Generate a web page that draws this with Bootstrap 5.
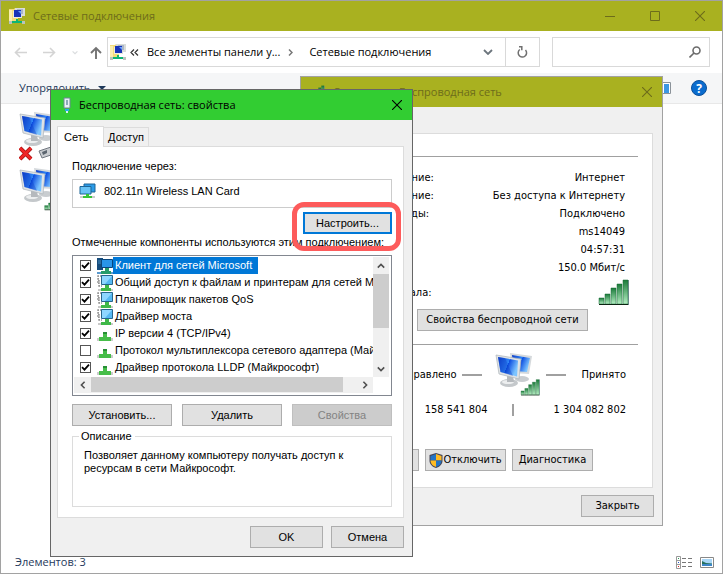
<!DOCTYPE html>
<html lang="ru">
<head>
<meta charset="utf-8">
<meta name="viewport" content="width=device-width, initial-scale=1">
<title>Сетевые подключения</title>
<link href="https://cdn.jsdelivr.net/npm/bootstrap@5.3.0/dist/css/bootstrap.min.css" rel="stylesheet">
<style>
body{font:11px/18px "Open Sans","Noto Sans",sans-serif;color:#000;background:#fff;overflow:hidden}
button,input{font:inherit;color:inherit}
svg{display:block;flex:none}
.plain{border:0;background:none;padding:0}
.explorer{min-height:100vh;border:1px solid #a2a2a2}
.olive{background:#a9b120;color:#6d6c1b}
.titlebar{height:30px}
.cap{width:45px;height:30px;display:flex;align-items:center;justify-content:center}
.cap.narrow{width:30px}
.navrow{height:42px;padding:0 12px 0 13px}
.up{margin:0 5px 0 12px}
.field{height:30px;border:1px solid #d9d9d9;background:#fff}
.addr{padding-left:2px}
.search{width:158px;margin-left:12px}
.search input{min-width:0;outline:0}
.refresh{width:34px;height:28px;border-left:1px solid #d9d9d9}
.toolbar-strip{height:31px;background:#f5f6f7;border-bottom:1px solid #e8e8e8;color:#1e395b;padding:0 15px 0 18px}
.files{padding:8px 18px}
.status{color:#1e395b;height:22px;padding:0 8px 0 14px}
.win{position:absolute;border:1px solid #a2a2a2;background:#f0f0f0}
.win-status{left:300px;top:76px;width:363px;font:11px/18px "DejaVu Sans Condensed","DejaVu Sans",sans-serif}
.win-props{left:50px;top:89px;width:363px;border-color:#666;font:11px/17px "Liberation Sans",Arial,sans-serif}
.ttl{font:11px/18px "Open Sans","Noto Sans",sans-serif}
.green{background:#32cd32}
.pane{border:1px solid #dcdcdc;background:#fff}
.win-status .pane{margin:26px 9px 7px 7px;padding:22px 14px 17px 10px;height:355px}
.rule{height:1px;background:#a0a0a0}
.pair{padding:0 13px 0 16px}
.signal{padding:2px 8px 3px 16px}
.wl{padding-right:50px}
.below{margin:13px 0 8px}
.traffic{gap:5px}
.recv{margin:0 4px 0 11px}
.actions{gap:6px;margin-top:30px}
.b{height:22px;border:1px solid #adadad;background:#e1e1e1;padding:0;white-space:nowrap}
.b.w73{width:73px}.b.w81{width:81px}.b.w99{width:100px}.b.wide{width:171px}.b.w88{width:89px}
.b:disabled{background:#ccc;border-color:#bfbfbf;color:#838383}
.b.focus{border:2px solid #0078d7}
.props-body{padding:6px 8px 0 6px}
.tb{border:1px solid #dcdcdc;border-bottom:0;background:#f0f0f0;padding:0}
.tb.on{background:#fff;width:47px;height:21px;margin-bottom:-1px;position:relative;text-align:left;padding-left:6px}
.tb.off{width:45px;height:19px;border-left:0}
.props-pane{padding:11px 11px 10px 14px}
.conn{border:1px solid #ccc;height:29px;padding:3px 6px}
.ring{position:absolute;left:241px;top:112px;width:109px;height:49px;border:5px solid #fd5b5b;border-radius:12px;pointer-events:none}
.box{border:1px solid #828790;padding:1px 2px 2px 1px}
.items{height:120px;overflow:hidden;min-width:0}
.it{height:17px;padding-left:6px;white-space:nowrap}
.it .form-label{margin:0;padding:0 2px}
.it.sel .form-label{background:#0078d7;color:#fff;padding-right:6px}
.it input{appearance:none;width:11px;height:11px;border:1px solid #555;margin:0 6px 0 0;background:#fff;flex:none}
.it input:checked{background:#fff url("data:image/svg+xml,%3Csvg xmlns='http://www.w3.org/2000/svg' viewBox='0 0 9 9'%3E%3Cpath d='M1 4.2 3.5 6.7 8 1.7' fill='none' stroke='%23000' stroke-width='1.8'/%3E%3C/svg%3E")}
.sb{background:#f0f0f0}
.sb.v{width:16px;height:120px}
.sb.h{height:16px}
.sb button{width:16px;height:17px;display:flex;align-items:center;justify-content:center}
.sb.h button{width:17px;height:16px}
.thumb{background:#cdcdcd}
.v .thumb{height:54px}.h .thumb{width:252px;height:15px}
fieldset.grp{border:1px solid #dcdcdc;height:79px;padding:0 11px;margin:2px 0 0}
.grp legend{float:none;width:auto;font-size:11px;line-height:16px;margin:0 0 5px -5px;padding:0 3px 0 2px}
.grp p{line-height:13px;margin:0}
.dotline{width:20px;height:2px;background:#a0a0a0}
</style>
<script src="https://cdn.jsdelivr.net/npm/bootstrap@5.3.0/dist/js/bootstrap.bundle.min.js"></script>
</head>
<body>
<svg width="0" height="0" class="position-absolute" aria-hidden="true">
<defs>
<linearGradient id="scr" x1="0" x2="1" y1="0" y2=".4"><stop offset="0" stop-color="#0d3cc9"/><stop offset=".55" stop-color="#2f86f7"/><stop offset=".56" stop-color="#0a4be0"/><stop offset="1" stop-color="#7cc4ff"/></linearGradient>
<linearGradient id="grn" x1="0" x2="0" y1="0" y2="1"><stop offset="0" stop-color="#1b7a3a"/><stop offset="1" stop-color="#b4eec2"/></linearGradient>
<symbol id="folder" viewBox="0 0 16 16"><path d="M0 1h5l1-1h3v13H0z" fill="#f3dc7a"/><path d="M0 2h3v11H0z" fill="#fbeeb0"/><path d="M6 0h10v8h-3v2H4V3h2z" fill="#d9dcd9"/><path d="M8 1h6v5H8z" fill="#a9b4c8"/><path d="M4 3h8v7H4z" fill="#ececdf"/><path d="M5 2h7v7H5z" fill="#1733b8"/><path d="M9 3h3v3z" fill="#6aa2ff"/><path d="M7 11h2v2h4v2H3v-2h4z" fill="#0cb573"/><path d="M0 13h3v3H0zM13 13h3v3h-3z" fill="#b9c3bd"/></symbol>
<symbol id="pcs" viewBox="0 0 38 34"><ellipse cx="27" cy="26" rx="7" ry="3" fill="#c9cdd0"/><path d="M15 0 37 3 34 21 18 20z" fill="#d5d9dc"/><path d="M17 2 35 5 32 19 19 18z" fill="url(#scr)"/><ellipse cx="14" cy="30" rx="9" ry="4" fill="#c4c8cb"/><ellipse cx="13" cy="29" rx="6" ry="2" fill="#eceeef"/><path d="M12 23h6l1 6h-7z" fill="#b5b9bd"/><path d="M1 2 26 6 24 26 4 21z" fill="#dfe3e6" stroke="#aeb4b9" stroke-width=".7"/><path d="M3 4 23 7.500 22 23.500 5.500 19z" fill="url(#scr)"/><path d="M3 4 10 5l8 18-12.500-4z" fill="#0b3cc2" opacity=".35"/></symbol>
<symbol id="bars" viewBox="0 0 32 27"><g fill="url(#grn)" stroke="#176b35" stroke-width=".5"><path d="M1 19h5v6H1z"/><path d="M7 15h5v10H7z"/><path d="M13 9h5v16h-5z"/><path d="M19 5h5v20h-5z"/><path d="M25 1h5v24h-5z"/></g><path d="M1 25h29v1H1z" fill="#0a2411"/><path d="M30 1h1v25h-1z" fill="#688"/></symbol>
<symbol id="card" viewBox="0 0 17 16"><path d="M5 1h11v8H5z" fill="#2b9be8" stroke="#1d6597"/><path d="M1 3.500h11v7.500H1z" fill="#69c3f5" stroke="#1d6597"/><path d="M7 11h3v2h3v2H4v-2h3z" fill="#37c437"/><path d="M1 13h3v2H1zM13 13h3v2h-3z" fill="#ccc"/></symbol>
<symbol id="svc" viewBox="0 0 16 16"><path d="M5 1H1v3h1v2H0v2h2v3h3" fill="none" stroke="#909090" stroke-width="1.400" stroke-dasharray="2 1"/><path d="M4.500.500h11v9h-11z" fill="#55b8f2" stroke="#27658c"/><path d="M5 1h10L8 9H5z" fill="#8ed6ff"/><path d="M8 10h4v3h2v3H4v-3h4z" fill="#3fb848"/><path d="M1 14h3v2H1zM14 14h2v2h-2z" fill="#c8c8c8"/></symbol>
<symbol id="clt" viewBox="0 0 16 16"><path d="M0 0h6v12H0z" fill="#174c7c"/><path d="M1 3h4M1 5h4" stroke="#4589bc"/><path d="M4.500 1.500h11v8h-11z" fill="#2995e8" stroke="#09457b"/><path d="M8 10h4v3h2v3H4v-3h4z" fill="#269b69"/><path d="M0 14h4v2H0zM14 14h2v2h-2z" fill="#5a99ce"/></symbol>
<symbol id="prt" viewBox="0 0 16 16"><path d="M6 6h4v5h4v4H2v-4h4z" fill="#46bd49"/><path d="M6 6h4v2H6z" fill="#278f35"/><path d="M0 12h2v3H0zM14 12h2v3h-2z" fill="#ccc"/></symbol>
<symbol id="x" viewBox="0 0 10 10"><path d="M0 0l10 10M10 0 0 10" fill="none" stroke="currentColor" stroke-width="1.100"/></symbol>
<symbol id="chev" viewBox="0 0 10 6"><path d="M1 1l4 4 4-4" fill="none" stroke="currentColor" stroke-width="1.800"/></symbol>
</defs>
</svg>

<main class="explorer d-flex flex-column">
  <header class="titlebar olive d-flex align-items-center">
    <svg width="16" height="16" class="ms-2"><use href="#folder"/></svg>
    <span class="ms-1 me-auto ps-1">Сетевые подключения</span>
    <button class="plain cap" aria-label="Свернуть"><svg width="10" height="10"><path d="M0 5.500h10" stroke="currentColor"/></svg></button>
    <button class="plain cap" aria-label="Развернуть"><svg width="10" height="10"><path d="M.5.500h9v9h-9z" fill="none" stroke="currentColor"/></svg></button>
    <button class="plain cap" aria-label="Закрыть"><svg width="10" height="10"><use href="#x"/></svg></button>
  </header>
  <nav class="navrow d-flex align-items-center">
    <button class="plain" aria-label="Назад"><svg width="13" height="11" fill="none" stroke="#d4d4d4" stroke-width="1.600"><path d="M13 5.500H1M6 1 1.500 5.500 6 10"/></svg></button>
    <button class="plain ms-3" aria-label="Вперёд"><svg width="13" height="11" fill="none" stroke="#d4d4d4" stroke-width="1.600"><path d="M0 5.500h12M7 1l4.500 4.500L7 10"/></svg></button>
    <button class="plain ms-3 text-secondary opacity-25" aria-label="Журнал"><svg width="6" height="5"><use href="#chev"/></svg></button>
    <button class="plain up" aria-label="Вверх"><svg width="12" height="13" fill="none" stroke="#737373" stroke-width="1.900"><path d="M6 13V2M1 7l5-5 5 5"/></svg></button>
    <div class="field addr d-flex align-items-center flex-grow-1">
      <svg width="16" height="16"><use href="#folder"/></svg>
      <svg width="9" height="7" class="ms-1" fill="none" stroke="#333" stroke-width="1.200"><path d="M4 .5l-3 3 3 3M8 .5l-3 3 3 3"/></svg>
      <a href="#" class="text-reset text-decoration-none ms-2">Все элементы панели у...</a>
      <svg width="5" height="7" class="ms-2 me-3" fill="none" stroke="#777" stroke-width="1.500"><path d="M1 .5l3 3-3 3"/></svg>
      <a href="#" class="text-reset text-decoration-none me-auto">Сетевые подключения</a>
      <button class="plain me-2 pe-1 text-secondary" aria-label="Список"><svg width="10" height="6"><use href="#chev"/></svg></button>
      <button class="plain refresh d-flex align-items-center justify-content-center" aria-label="Обновить"><svg width="11" height="12" fill="none" stroke="#707070" stroke-width="1.500"><path d="M2.800 3.500A4.200 4.200 0 1 0 8.500 4M2 .8h2.800v3.400"/></svg></button>
    </div>
    <div class="field search d-flex align-items-center">
      <input class="plain flex-grow-1" type="text" aria-label="Поиск">
      <svg width="12" height="12" class="me-2" fill="none" stroke="#6c6c6c" stroke-width="1.600"><circle cx="7.500" cy="4.500" r="3.500"/><path d="M5 7 .5 11.500"/></svg>
    </div>
  </nav>
  <div class="toolbar-strip d-flex align-items-center">
    <button class="plain me-auto d-flex align-items-center">Упорядочить<svg width="8" height="4" class="ms-2"><path d="M0 0h8L4 4z" fill="#1e395b"/></svg></button>
    <button class="plain me-3" aria-label="Область просмотра"><svg width="16" height="12"><path d="M.5.500h15v11H.5z" fill="#fff" stroke="#8b9299"/><path d="M9 2h5v9H9z" fill="#3c97e3"/></svg></button>
    <button class="plain ms-1" aria-label="Справка"><svg width="16" height="16"><circle cx="8" cy="8" r="7.500" fill="#0a6cce" stroke="#0b4f99"/><text x="8" y="12.500" text-anchor="middle" font-size="12" font-weight="700" fill="#fff">?</text></svg></button>
  </div>
  <div class="files flex-grow-1">
    <svg width="46" height="56" viewBox="0 0 46 56"><use href="#pcs" width="38" height="34"/><path d="M1 36l11 11M12 36 1 47" stroke="#a40d0d" stroke-width="4"/><path d="M1 36l11 11M12 36 1 47" stroke="#f02525" stroke-width="2.500"/><path d="M20 39l12-4v8l-9 3z" fill="#c9ccd0" stroke="#707780"/><path d="M23 40l5-2v3l-4 2z" fill="#5b646e"/></svg>
    <svg width="46" height="46" viewBox="0 0 46 46"><use href="#pcs" width="38" height="34"/><use href="#bars" x="25" y="25" width="21" height="18"/></svg>
  </div>
  <footer class="status d-flex align-items-center">
    <span class="me-auto">Элементов: 3</span>
    <button class="plain me-2" aria-label="Таблица"><svg width="16" height="13" fill="none"><path d="M.5.500h4v12h-4zM.5 4.500h4M.5 8.500h4" stroke="#999"/><path d="M6 2.500h4m2 0h4m-10 4h4m2 0h4m-10 4h4m2 0h4" stroke="#777"/><path d="M2 2h1v1H2z" fill="#2a9a52"/><path d="M2 6h1v1H2z" fill="#25c"/><path d="M2 10h1v1H2z" fill="#d22"/></svg></button>
    <button class="plain" aria-label="Крупные значки"><svg width="14" height="11"><path d="M.5.500h13v10H.5z" fill="#fff" stroke="#888"/><path d="M2 2h10v7H2z" fill="#a9d6f6"/><path d="M2 4l4 2 6 .5V9H2z" fill="#25705e"/><path d="M2 7h10v2H2z" fill="#3d85c6"/></svg></button>
  </footer>
</main>

<section class="win win-status" aria-label="Состояние">
  <header class="titlebar olive d-flex align-items-center ttl">
    <svg width="16" height="14" class="ms-2"><use href="#bars"/></svg>
    <span class="ms-1 ps-1 me-auto">Состояние - Беспроводная сеть</span>
    <button class="plain cap narrow" aria-label="Закрыть"><svg width="10" height="10"><use href="#x"/></svg></button>
  </header>
  <div class="pane">
    <div class="rule mb-2"></div>
    <div class="pt-1">
      <div class="pair d-flex justify-content-between"><span>IPv4-подключение:</span><span>Интернет</span></div>
      <div class="pair d-flex justify-content-between"><span>IPv6-подключение:</span><span>Без доступа к Интернету</span></div>
      <div class="pair d-flex justify-content-between"><span>Состояние среды:</span><span>Подключено</span></div>
      <div class="pair d-flex justify-content-between"><span>SSID:</span><span>ms14049</span></div>
      <div class="pair d-flex justify-content-between"><span>Длительность:</span><span>04:57:31</span></div>
      <div class="pair d-flex justify-content-between"><span>Скорость:</span><span>150.0 Мбит/с</span></div>
    </div>
    <div class="signal d-flex justify-content-between align-items-center"><span>Качество сигнала:</span><svg width="32" height="27"><use href="#bars"/></svg></div>
    <div class="d-flex justify-content-end wl"><button class="b wide">Свойства беспроводной сети</button></div>
    <div class="rule below"></div>
    <div class="traffic d-flex align-items-center justify-content-end pe-2">
      <span>Отправлено</span><span class="dotline"></span>
      <svg class="ms-2" width="46" height="44" viewBox="0 0 46 44"><use href="#pcs" width="38" height="34"/><use href="#bars" x="25" y="26" width="21" height="17"/></svg>
      <span class="dotline"></span><span class="recv">Принято</span>
    </div>
    <div class="d-flex justify-content-end align-items-center gap-4 pe-2 pt-1">
      <span>158 541 804</span><svg width="2" height="12"><path d="M0 0h2v12H0z" fill="#a0a0a0"/></svg><span class="ms-3 me-1">1 304 082 802</span>
    </div>
    <div class="actions d-flex">
      <button class="b w99">Свойства</button>
      <button class="b w81 d-flex align-items-center justify-content-center"><svg width="14" height="15"><path d="M7 0l6.500 2v6c0 3-3 6-6.500 7C3.500 14 .5 11 .5 8V2z" fill="#445"/><path d="M7 1v6.500H1.500V3z" fill="#2373c4"/><path d="M7 1v6.500h5.500V3z" fill="#ffbb22"/><path d="M7 7.500V14C4 13 1.500 11 1.500 7.500z" fill="#ffbb22"/><path d="M7 7.500V14c3-1 5.500-3 5.500-6.500z" fill="#2373c4"/></svg>Отключить</button>
      <button class="b w81">Диагностика</button>
    </div>
  </div>
  <div class="d-flex justify-content-end pe-2 pb-2"><button class="b w73">Закрыть</button></div>
</section>

<section class="win win-props" aria-label="Свойства">
  <header class="titlebar green d-flex align-items-center ttl">
    <svg width="16" height="16" class="ms-2"><path d="M5 1h6v10H5z" fill="#e9f1f5" stroke="#6d8794"/><path d="M7 3h2v5H7z" fill="#8ba8b8"/><path d="M6 12h4v2H6z" fill="#22aeea"/><path d="M7 14h2v2H7z" fill="#d5ecf8"/></svg>
    <span class="ms-1 me-auto">Беспроводная сеть: свойства</span>
    <button class="plain cap narrow" aria-label="Закрыть"><svg width="10" height="10"><use href="#x"/></svg></button>
  </header>
  <div class="props-body">
    <div class="d-flex align-items-end" role="tablist">
      <button class="tb on" role="tab" aria-selected="true">Сеть</button><button class="tb off" role="tab" aria-selected="false">Доступ</button>
    </div>
    <div class="pane props-pane">
      <div>Подключение через:</div>
      <div class="conn d-flex gap-2 mt-1"><svg width="17" height="16"><use href="#card"/></svg><span>802.11n Wireless LAN Card</span></div>
      <div class="d-flex justify-content-end mt-1"><button class="b w88 focus">Настроить...</button></div>
      <div class="text-nowrap">Отмеченные компоненты используются этим подключением:</div>
      <div class="box mt-1">
        <div class="d-flex">
          <div class="items flex-grow-1">
            <div class="it sel d-flex align-items-center"><input id="c1" type="checkbox" checked><svg width="16" height="16"><use href="#clt"/></svg><label class="form-label" for="c1">Клиент для сетей Microsoft</label></div>
            <div class="it d-flex align-items-center"><input id="c2" type="checkbox" checked><svg width="16" height="16"><use href="#svc"/></svg><label class="form-label" for="c2">Общий доступ к файлам и принтерам для сетей Microsoft</label></div>
            <div class="it d-flex align-items-center"><input id="c3" type="checkbox" checked><svg width="16" height="16"><use href="#svc"/></svg><label class="form-label" for="c3">Планировщик пакетов QoS</label></div>
            <div class="it d-flex align-items-center"><input id="c4" type="checkbox" checked><svg width="16" height="16"><use href="#svc"/></svg><label class="form-label" for="c4">Драйвер моста</label></div>
            <div class="it d-flex align-items-center"><input id="c5" type="checkbox" checked><svg width="16" height="16"><use href="#prt"/></svg><label class="form-label" for="c5">IP версии 4 (TCP/IPv4)</label></div>
            <div class="it d-flex align-items-center"><input id="c6" type="checkbox"><svg width="16" height="16"><use href="#prt"/></svg><label class="form-label" for="c6">Протокол мультиплексора сетевого адаптера (Майкрософт)</label></div>
            <div class="it d-flex align-items-center"><input id="c7" type="checkbox" checked><svg width="16" height="16"><use href="#prt"/></svg><label class="form-label" for="c7">Драйвер протокола LLDP (Майкрософт)</label></div>
          </div>
          <div class="sb v d-flex flex-column"><button class="plain" aria-label="Вверх"><svg width="8" height="6" viewBox="0 0 10 6"><path d="M1 5l4-4 4 4" fill="none" stroke="#505050" stroke-width="2"/></svg></button><div class="thumb"></div><button class="plain mt-auto" aria-label="Вниз"><svg width="8" height="6" viewBox="0 0 10 6"><path d="M1 1l4 4 4-4" fill="none" stroke="#505050" stroke-width="2"/></svg></button></div>
        </div>
        <div class="sb h d-flex me-3"><button class="plain" aria-label="Влево"><svg width="6" height="8" viewBox="0 0 6 10"><path d="M5 1L1 5l4 4" fill="none" stroke="#505050" stroke-width="2"/></svg></button><div class="thumb"></div><button class="plain ms-auto" aria-label="Вправо"><svg width="6" height="8" viewBox="0 0 6 10"><path d="M1 1l4 4-4 4" fill="none" stroke="#505050" stroke-width="2"/></svg></button></div>
      </div>
      <div class="d-flex justify-content-between mt-2"><button class="b w99">Установить...</button><button class="b w99">Удалить</button><button class="b w99" disabled>Свойства</button></div>
      <fieldset class="grp"><legend>Описание</legend><p>Позволяет данному компьютеру получать доступ к ресурсам в сети Майкрософт.</p></fieldset>
    </div>
    <div class="d-flex justify-content-end gap-2 py-2"><button class="b w73">OK</button><button class="b w73">Отмена</button></div>
  </div>
  <div class="ring"></div>
</section>
</body>
</html>
